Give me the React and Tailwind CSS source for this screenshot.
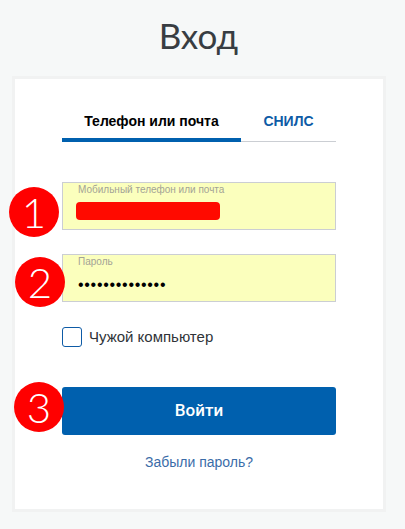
import React from "react";

function Badge({ n, className }) {
    return (
        <div
            className={`absolute w-[50px] h-[50px] rounded-full bg-[#ff0000] text-white flex items-center justify-center text-[42px] leading-none font-light font-['Lato',sans-serif] ${className}`}
        >
            {n}
        </div>
    );
}

function Field({ label, children }) {
    return (
        <div className="h-12 border border-[#cbced3] bg-[#fbffbd] px-[15px] relative">
            <div className="text-[10px] leading-3 pt-[1px] text-[#a3a396]">{label}</div>
            {children}
        </div>
    );
}

export default function App() {
    return (
        <div className="w-[405px] h-[529px] overflow-hidden bg-[#f6f8f8] font-['Liberation_Sans',sans-serif]">
            <h1 className="h-[76px] pt-[13px] text-center text-[35px] leading-[44px] text-[#383d42] font-['Lato','Open_Sans',sans-serif] pr-[8px]">
                Вход
            </h1>

            <div className="relative mx-3 w-[374px] h-[436px] border-[3px] border-[#f1f2f2] bg-white px-[47px] pt-[30px]">
                <div className="flex h-[33px] border-b border-[#cbced3] text-[14px] font-bold">
                    <div className="w-[179px] h-[33px] border-b-4 border-[#0060ae] text-center text-black leading-[24px]">
                        Телефон или почта
                    </div>
                    <div className="flex-1 text-center text-[#0e5ba6] leading-[24px]">СНИЛС</div>
                </div>

                <div className="mt-[40px]">
                    <Field label="Мобильный телефон или почта">
                        <div className="mt-[6px] -ml-[2px] w-[144px] h-[18px] rounded-[4px] bg-[#ff0a00]" />
                    </Field>
                </div>

                <div className="mt-6">
                    <Field label="Пароль">
                        <div className="mt-[7px] text-[16px] leading-5 tracking-[0.7px] text-black">••••••••••••••</div>
                    </Field>
                </div>

                <div className="mt-6 flex items-center gap-[7px]">
                    <div className="w-5 h-5 rounded-[3px] border border-[#0e5ba6] bg-white" />
                    <span className="text-[15px] text-[#2f3338]">Чужой компьютер</span>
                </div>

                <button className="mt-[38px] w-full h-12 rounded-[3px] bg-[#0060ae] text-white text-[17px] font-medium font-['Roboto',sans-serif]">
                    Войти
                </button>

                <div className="mt-[17px] text-center text-[14px] leading-5 text-[#3a6ca8]">Забыли пароль?</div>

                <Badge n="1" className="left-[-6px] top-[108px]" />
                <Badge n="2" className="left-0 top-[178px]" />
                <Badge n="3" className="left-[-1px] top-[303px]" />
            </div>
        </div>
    );
}
